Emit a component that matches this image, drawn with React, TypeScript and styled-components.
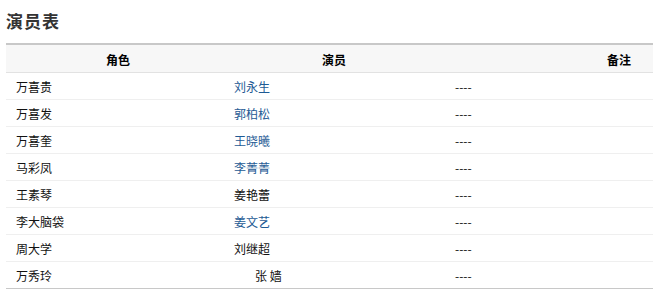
import React from "react";
import styled, { createGlobalStyle } from "styled-components";

const Global = createGlobalStyle`
  html, body { margin: 0; padding: 0; background: #fff; }
  body { font-family: "Noto Sans CJK SC", "Liberation Sans", sans-serif; }
`;

const Page = styled.div`
  width: 653px;
  padding: 9px 0 0 6px;
  box-sizing: border-box;
`;

const Title = styled.h2`
  margin: 0;
  font-size: 17px;
  line-height: 24px;
  font-weight: bold;
  color: #333;
  letter-spacing: 1px;
`;

const Table = styled.div`
  margin-top: 10px;
  border-top: 2px solid #c8c8c8;
  border-bottom: 1px solid #c8c8c8;
`;

const HeadRow = styled.div`
  display: grid;
  grid-template-columns: 224px 208px 1fr;
  height: 27px;
  align-items: center;
  background: #f7f7f7;
  border-bottom: 1px solid #e2e2e2;
  font-size: 12px;
  font-weight: bold;
  color: #000;
`;

const HeadCell = styled.div<{ $align: "center" | "right" }>`
  text-align: ${(p) => p.$align};
  padding-right: ${(p) => (p.$align === "right" ? "22px" : "0")};
  padding-top: 2px;
`;

const Row = styled.div<{ $last?: boolean }>`
  display: grid;
  grid-template-columns: 224px 208px 1fr;
  height: ${(p) => (p.$last ? "26px" : "26px")};
  align-items: center;
  border-bottom: ${(p) => (p.$last ? "none" : "1px solid #efefef")};
  font-size: 12px;
  color: #111;
`;

const Cell = styled.div<{ $pad: number }>`
  padding-left: ${(p) => p.$pad}px;
  white-space: pre;
`;

const Link = styled.span`
  color: #1e5a94;
`;

const rows: { role: string; actor: string; link: boolean; pad?: number }[] = [
  { role: "万喜贵", actor: "刘永生", link: true },
  { role: "万喜发", actor: "郭柏松", link: true },
  { role: "万喜奎", actor: "王晓曦", link: true },
  { role: "马彩凤", actor: "李菁菁", link: true },
  { role: "王素琴", actor: "姜艳蕾", link: false },
  { role: "李大脑袋", actor: "姜文艺", link: true },
  { role: "周大学", actor: "刘继超", link: false },
  { role: "万秀玲", actor: "张 嫱", link: false, pad: 25 },
];

export default function App() {
  return (
    <Page>
      <Global />
      <Title>演员表</Title>
      <Table>
        <HeadRow>
          <HeadCell $align="center">角色</HeadCell>
          <HeadCell $align="center">演员</HeadCell>
          <HeadCell $align="right">备注</HeadCell>
        </HeadRow>
        {rows.map((r, i) => (
          <Row key={r.role} $last={i === rows.length - 1}>
            <Cell $pad={10}>{r.role}</Cell>
            <Cell $pad={r.pad ?? 4}>{r.link ? <Link>{r.actor}</Link> : r.actor}</Cell>
            <Cell $pad={17}>----</Cell>
          </Row>
        ))}
      </Table>
    </Page>
  );
}
